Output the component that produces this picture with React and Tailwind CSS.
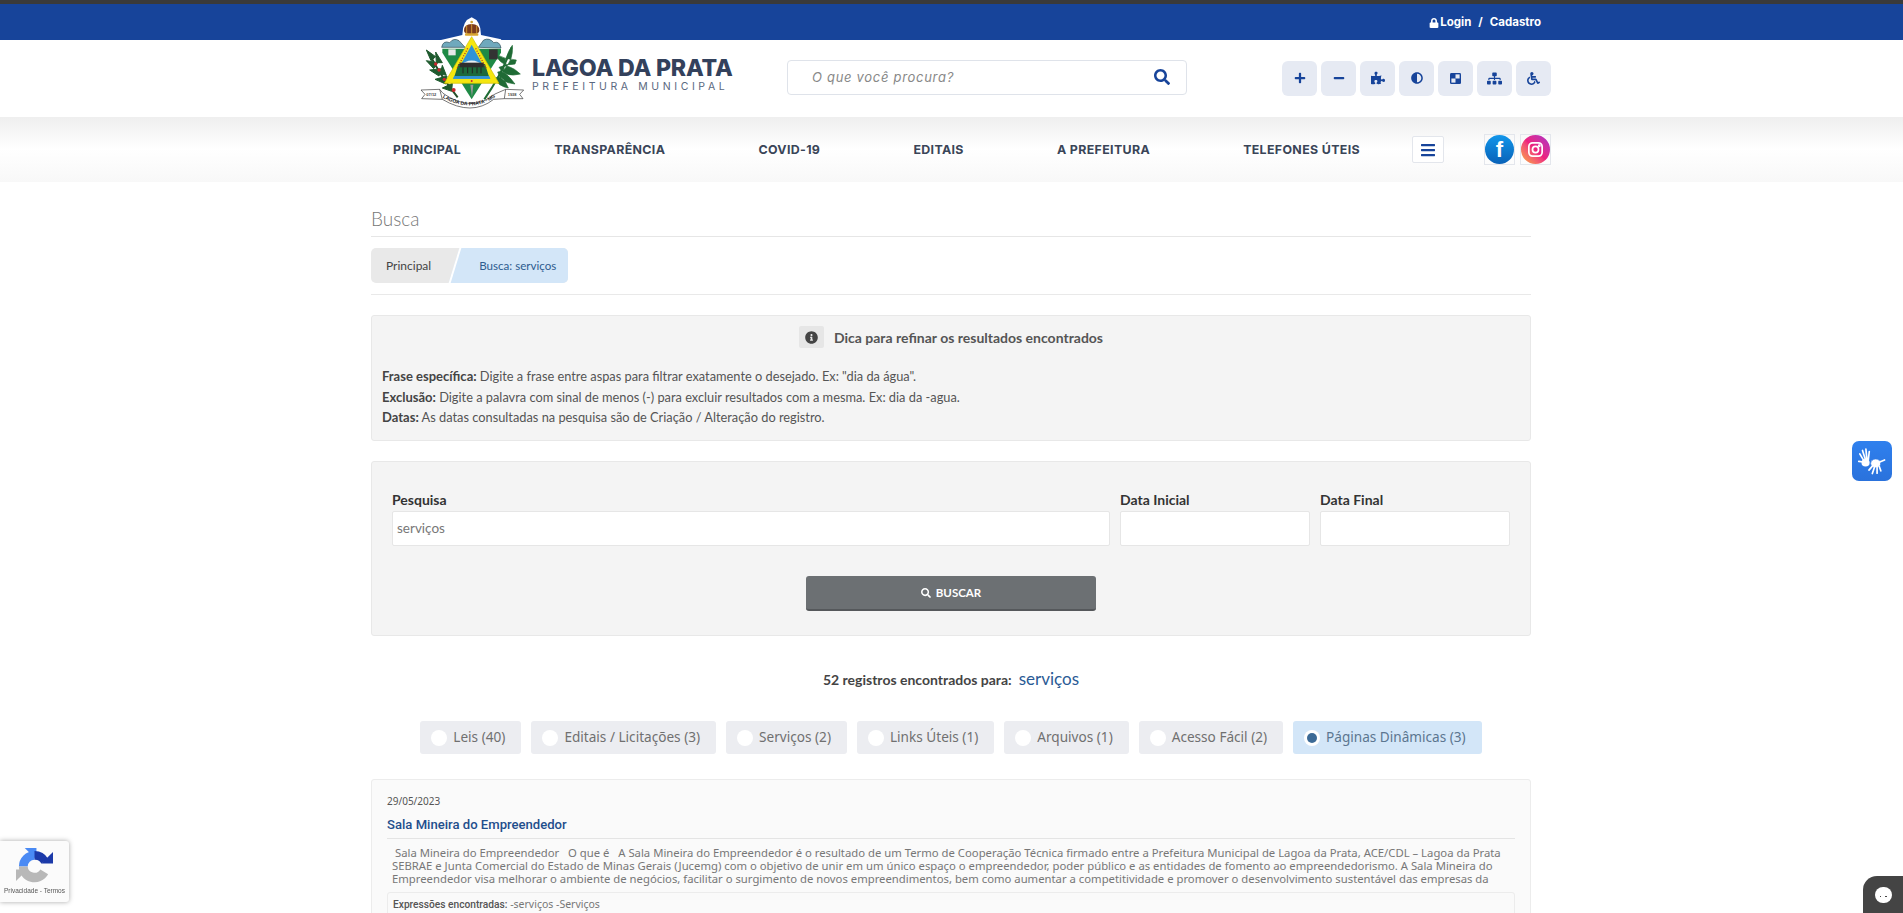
import { FaPlus, FaMinus, FaPuzzlePiece, FaAdjust, FaSitemap, FaWheelchair, FaLock, FaSearch, FaBars, FaInfoCircle } from "react-icons/fa"

const lato = "font-['Lato','Liberation_Sans',sans-serif]"

function Crest() {
  return (
    <svg viewBox="0 0 360 330" className="w-[120px] h-[110px] shrink-0">
      {/* white halo */}
      <path d="M170 22 Q198 32 198 75 L258 88 Q272 120 262 225 L175 290 L118 230 L72 222 Q66 120 78 90 L142 75 Q142 32 170 22 Z" fill="#fff" />
      {/* left branch */}
      <path d="M42 128 Q70 190 128 262" stroke="#234f2a" strokeWidth="6" fill="none" />
      <path d="M34 120 L62 140 L48 152 Z M34 152 L68 158 L56 176 Z M44 180 L80 176 L72 198 Z M60 208 L96 198 L92 222 Z M82 234 L112 220 L110 244 Z M62 126 L82 158 L64 158 Z M82 166 L94 196 L76 192 Z" fill="#1e5a2e" stroke="#1e5a2e" strokeWidth="3" strokeLinejoin="round" />
      <circle cx="62" cy="162" r="5" fill="#c8262c" />
      <circle cx="72" cy="180" r="5" fill="#c8262c" />
      <circle cx="88" cy="208" r="5" fill="#c8262c" />
      <circle cx="116" cy="240" r="6" fill="#c8262c" />
      {/* right branch */}
      <path d="M290 112 Q262 190 208 268" stroke="#1f6b35" strokeWidth="6" fill="none" />
      <path d="M292 106 Q296 150 266 180 Q270 138 292 106 Z M304 150 Q270 148 244 134 Q256 172 300 162 Z M316 192 Q280 158 252 172 Q270 204 316 192 Z M300 222 Q268 178 248 186 Q256 218 300 222 Z M238 206 Q262 188 280 234 Q250 228 238 206 Z" fill="#1f6b35" stroke="#1f6b35" strokeWidth="2" strokeLinejoin="round" />
      {/* shield */}
      <path d="M82 116 L258 116 L258 128 L170 268 L82 128 Z" fill="#1f8a46" />
      <path d="M80 112 Q84 90 104 98 Q116 82 132 92 L150 112 Z" fill="#6fa9bd" stroke="#2d4a55" strokeWidth="2" />
      <path d="M190 112 L206 90 Q224 82 236 98 Q254 92 258 114 Z" fill="#6fa9bd" stroke="#2d4a55" strokeWidth="2" />
      <rect x="100" y="118" width="22" height="18" fill="#e9e9e9" />
      <rect x="222" y="118" width="26" height="30" fill="#333" />
      {/* sword below the triangle */}
      <path d="M166 224 H175 L171 262 Z" fill="#9a9a9a" />
      {/* triangle */}
      <path d="M170 80 L252 220 L88 220 Z" fill="#f5e60f" stroke="#cdbd00" strokeWidth="2" />
      <path d="M170 104 L226 206 L114 206 Z" fill="#2f93d6" />
      <path d="M132 168 Q170 135 208 168 Z" fill="#e9eef2" />
      <path d="M130 162 H210 L222 200 H118 Z" fill="#1c6a3b" />
      <path d="M134 158 H206 V172 H134 Z" fill="#2e2e2e" />
      <path d="M144 172 V190 M158 172 V190 M172 172 V190 M186 172 V190 M198 172 V190" stroke="#222" strokeWidth="3" />
      <path d="M118 198 H222 L226 206 H114 Z" fill="#2f93d6" />
      <path d="M158 115 L126 176 M182 115 L214 176" stroke="#a33" strokeWidth="4" strokeDasharray="3 5" />
      <circle cx="170" cy="213" r="3" fill="#c8262c" />
      {/* crown */}
      <circle cx="170" cy="36" r="4" fill="#c9a033" />
      <path d="M147 62 Q147 42 170 42 Q193 42 193 62 Q193 72 170 72 Q147 72 147 62 Z" fill="#7a3b1e" />
      <path d="M155 46 V70 M170 42 V72 M185 46 V70" stroke="#d9a531" strokeWidth="2.5" />
      <rect x="150" y="70" width="40" height="7" rx="2" fill="#d9a531" />
      {/* ribbon */}
      <path d="M18 240 L74 238 L84 250 Q170 310 240 252 L272 238 L326 240 L314 253 L324 266 L268 266 L236 268 Q170 320 82 268 L20 266 L30 253 Z" fill="#fff" stroke="#333" strokeWidth="2" />
      <path d="M74 238 L82 268 M272 238 L268 266" stroke="#333" strokeWidth="2" />
      <path id="crest-ribbon" d="M82 262 Q170 312 242 260" fill="none" />
      <text fontSize="15" fontWeight="700" fill="#222" fontFamily="Liberation Sans, sans-serif">
        <textPath href="#crest-ribbon" startOffset="50%" textAnchor="middle">LAGOA DA PRATA - MG</textPath>
      </text>
      <text x="34" y="258" fontSize="12" fontWeight="700" fill="#444" fontFamily="Liberation Sans, sans-serif">07/12</text>
      <text x="278" y="258" fontSize="12" fontWeight="700" fill="#444" fontFamily="Liberation Sans, sans-serif">1938</text>
    </svg>
  )
}

function CheckerIcon() {
  return (
    <svg viewBox="0 0 12 12" className="w-[11px] h-[11px]">
      <rect width="12" height="12" rx="1.5" fill="#17449a" />
      <rect x="6" y="1.5" width="4.5" height="4.5" fill="#e6eaf3" />
      <rect x="1.5" y="6" width="4.5" height="4.5" fill="#e6eaf3" />
    </svg>
  )
}

function HandsIcon() {
  return (
    <svg viewBox="10 10 118 118" className="w-[40px] h-[40px]" fill="none" stroke="#fff" strokeLinecap="round">
      <g strokeWidth="5">
        <path d="M46 70 L33 48 M50 66 L41 38 M54 64 L51 34 M58 66 L61 41" />
        <path d="M44 72 L30 70" />
      </g>
      <ellipse cx="50" cy="74" rx="12" ry="11" fill="#fff" stroke="none" />
      <ellipse cx="80" cy="76" rx="15" ry="13" fill="#fff" stroke="#2f7ae8" strokeWidth="2" />
      <g strokeWidth="5">
        <path d="M70 84 L60 96 M76 88 L70 106 M84 88 L84 105 M90 84 L95 98" />
        <path d="M92 72 L106 66" />
      </g>
    </svg>
  )
}

function ToolButton({ children }) {
  return (
    <button className="w-[35px] h-[35px] rounded-md bg-[#e6eaf3] flex items-center justify-center text-[#17449a] text-[12px]">
      {children}
    </button>
  )
}

function Header() {
  return (
    <header>
      <div className="h-1 bg-[#3a3a3a]" />
      <div className="h-9 bg-[#17449a] flex justify-end items-center pr-[362px] pt-[1px] text-white text-[11.5px] font-bold font-['Inter',sans-serif]">
        <FaLock className="text-[10px] mr-[1px]" />
        <span>Login</span>
        <span className="mx-[7px]">/</span>
        <span>Cadastro</span>
      </div>
      <div className="relative h-[77px] bg-white flex items-center">
        <div className="absolute left-[415px] top-[-30px] z-10">
          <Crest />
        </div>
        <div className="ml-[532px] w-[215px] shrink-0 pb-[8px] font-['Inter',sans-serif]">
          <div className="text-[#33415c] text-[23.2px] leading-[24px] font-extrabold tracking-[-0.2px] whitespace-nowrap">LAGOA DA PRATA</div>
          <div className="text-[#5a6880] text-[10.5px] leading-[13px] tracking-[3.6px] whitespace-nowrap">PREFEITURA MUNICIPAL</div>
        </div>
        <div className="ml-[40px] w-[400px] h-[35px] border border-[#dfe3ea] rounded-[4px] bg-white flex items-center justify-between pl-6 pr-[16px] mb-[3px]">
          <span className="italic text-[13px] tracking-[0.7px] pt-[1px] text-[#888] font-['Inter',sans-serif]">O que você procura?</span>
          <FaSearch className="text-[#17449a] text-[16px]" />
        </div>
        <div className="ml-[95px] flex gap-1 mb-[1px]">
          <ToolButton><FaPlus /></ToolButton>
          <ToolButton><FaMinus /></ToolButton>
          <ToolButton><FaPuzzlePiece className="text-[14px]" /></ToolButton>
          <ToolButton><FaAdjust /></ToolButton>
          <ToolButton><CheckerIcon /></ToolButton>
          <ToolButton><FaSitemap className="text-[15px]" /></ToolButton>
          <ToolButton><FaWheelchair className="text-[13px]" /></ToolButton>
        </div>
      </div>
      <nav className="relative h-[65px] bg-gradient-to-b from-[#efefef] via-white via-50% to-[#f8f8f8] flex items-center font-['Inter',sans-serif]">
        <ul className="ml-[393px] w-[967px] shrink-0 pt-[1px] flex items-center justify-between text-[12.4px] font-bold text-[#3a4558] tracking-[0.35px] whitespace-nowrap">
          <li>PRINCIPAL</li>
          <li>TRANSPARÊNCIA</li>
          <li>COVID-19</li>
          <li>EDITAIS</li>
          <li>A PREFEITURA</li>
          <li>TELEFONES ÚTEIS</li>
        </ul>
        <button className="ml-[52px] w-[32px] h-[27px] bg-white border border-[#e3e6ec] rounded-[2px] flex items-center justify-center text-[#17449a] text-[16px]">
          <FaBars />
        </button>
        <div className="ml-[40px] flex gap-[5px]">
          <div className="w-[31px] h-[31px] border border-[#e3e6ec] flex items-center justify-center">
            <div className="w-[29px] h-[29px] shrink-0 rounded-full bg-gradient-to-b from-[#1296ea] to-[#0a62b8] flex items-center justify-center text-white text-[22px] font-bold font-['Liberation_Sans',sans-serif]">f</div>
          </div>
          <div className="w-[31px] h-[31px] border border-[#e3e6ec] flex items-center justify-center">
            <div className="w-[29px] h-[29px] shrink-0 rounded-full bg-gradient-to-tr from-[#f9a825] via-[#ee1f7e] to-[#a928c9] flex items-center justify-center">
              <svg viewBox="0 0 20 20" className="w-[19px] h-[19px]" fill="none" stroke="#fff" strokeWidth="1.8">
                <rect x="3" y="3" width="14" height="14" rx="4" />
                <circle cx="10" cy="10" r="3.2" />
                <circle cx="14" cy="6" r="0.6" fill="#fff" />
              </svg>
            </div>
          </div>
        </div>
      </nav>
    </header>
  )
}

function Breadcrumb() {
  return (
    <div className="relative w-[197px] h-[35px] rounded-[5px] bg-[#e9e9e9] overflow-hidden flex items-center text-[12px]">
      <div className="absolute left-[83px] top-0 w-[200px] h-full bg-[#d3e6f8] border-l-2 border-white -skew-x-[17deg]" />
      <span className="relative ml-[15px] text-[#444]">Principal</span>
      <span className="relative ml-[48px] text-[11.6px] text-[#2e5c8f]">Busca: serviços</span>
    </div>
  )
}

function HintPanel() {
  return (
    <section className="h-[126px] bg-[#f4f4f4] border border-[#e8e8e8] rounded-[3px] px-[10px] pt-[10px] text-[#555]">
      <div className="flex items-center justify-center gap-[10px] h-[22px] text-[14px] font-bold">
        <span className="w-[25px] h-[22px] bg-[#e6e6e6] rounded-[2px] flex items-center justify-center text-[#444] text-[13px]">
          <FaInfoCircle />
        </span>
        Dica para refinar os resultados encontrados
      </div>
      <div className="mt-[18px] text-[12.8px] leading-[20.5px]">
        <p><b className="text-[13px] text-[#444]">Frase específica:</b> Digite a frase entre aspas para filtrar exatamente o desejado. Ex: "dia da água".</p>
        <p><b className="text-[13px] text-[#444]">Exclusão:</b> Digite a palavra com sinal de menos (-) para excluir resultados com a mesma. Ex: dia da -agua.</p>
        <p><b className="text-[13px] text-[#444]">Datas:</b> As datas consultadas na pesquisa são de Criação / Alteração do registro.</p>
      </div>
    </section>
  )
}

function Field({ label, value, className }) {
  return (
    <label className={className}>
      <span className="block text-[14px] leading-[20px] font-bold text-[#333] mb-[1px]">{label}</span>
      <span className="block h-[35px] bg-white border border-[#e6e6e6] rounded-[2px] px-[4px] text-[13.5px] leading-[33px] text-[#777]">{value}</span>
    </label>
  )
}

function SearchPanel() {
  return (
    <section className="mt-5 h-[175px] bg-[#f4f4f4] border border-[#e8e8e8] rounded-[3px] px-5 pt-[28px]">
      <div className="flex gap-[10px]">
        <Field label="Pesquisa" value="serviços" className="w-[718px]" />
        <Field label="Data Inicial" className="w-[190px]" />
        <Field label="Data Final" className="w-[190px]" />
      </div>
      <button className="block mx-auto mt-[30px] w-[290px] h-[35px] bg-[#6c7073] border-b-2 border-[#55585b] rounded-[3px] text-white text-[11.5px] font-bold">
        <FaSearch className="inline text-[10px] mr-[5px] mb-[2px]" />
        BUSCAR
      </button>
    </section>
  )
}

const filters = [
  "Leis (40)",
  "Editais / Licitações (3)",
  "Serviços (2)",
  "Links Úteis (1)",
  "Arquivos (1)",
  "Acesso Fácil (2)",
  "Páginas Dinâmicas (3)",
]

function Filters() {
  return (
    <div className="mt-[32px] flex justify-center gap-[10px] font-['Noto_Sans',sans-serif] text-[13.6px]">
      {filters.map((f, i) => {
        const active = i === filters.length - 1
        return (
          <div key={f} className={"h-[33px] rounded-[3px] pl-[11px] pr-[16px] flex items-center gap-[6px] whitespace-nowrap " + (active ? "bg-[#d3e6f8] text-[#5c7690]" : "bg-[#ecedf1] text-[#707070]")}>
            <span className="w-[16px] h-[16px] rounded-full bg-white flex items-center justify-center">
              {active && <span className="w-[10px] h-[10px] rounded-full bg-[#3c6a96]" />}
            </span>
            {f}
          </div>
        )
      })}
    </div>
  )
}

function ResultCard() {
  return (
    <article className="mt-[25px] bg-[#fafafa] border border-[#ececec] rounded-[3px] px-[15px] pt-[14px] pb-4 font-['Noto_Sans',sans-serif]">
      <div className="text-[10px] leading-[14px] text-[#555]">29/05/2023</div>
      <h3 className="mt-[7px] pb-[3px] text-[13.1px] leading-[20px] font-medium text-[#1f4e8c] border-b border-[#e4e4e4] font-['Roboto',sans-serif]">Sala Mineira do Empreendedor</h3>
      <p className="mt-[7px] px-[5px] text-[11.3px] leading-[13px] text-[#777] whitespace-pre">
        {" Sala Mineira do Empreendedor   O que é   A Sala Mineira do Empreendedor é o resultado de um Termo de Cooperação Técnica firmado entre a Prefeitura Municipal de Lagoa da Prata, ACE/CDL – Lagoa da Prata\n"}
        {"SEBRAE e Junta Comercial do Estado de Minas Gerais (Jucemg) com o objetivo de unir em um único espaço o empreendedor, poder público e as entidades de fomento ao empreendedorismo. A Sala Mineira do\n"}
        {"Empreendedor visa melhorar o ambiente de negócios, facilitar o surgimento de novos empreendimentos, bem como aumentar a competitividade e promover o desenvolvimento sustentável das empresas da"}
      </p>
      <div className="mt-[7px] h-[40px] border border-[#ececec] rounded-[3px] px-[5px] pt-[3px] text-[10.5px] leading-[16px] text-[#777]">
        <b className="font-['Roboto',sans-serif] font-medium text-[10.2px] text-[#555]">Expressões encontradas:</b> -serviços -Serviços
      </div>
    </article>
  )
}

function Overlays() {
  return (
    <>
      <div className="fixed right-[11px] top-[441px] w-[40px] h-[40px] rounded-[7px] bg-gradient-to-b from-[#2f80ee] to-[#2a72dc]">
        <HandsIcon />
      </div>
      <div className="fixed left-0 top-[841px] w-[69px] h-[61px] bg-[#fbfbfb] rounded-r-[3px] shadow-[0_0_5px_rgba(0,0,0,0.35)] flex flex-col items-center pt-[7px]">
        <svg viewBox="0 0 38 38" className="w-[37px] h-[37px]">
          <path d="M19 3 A16 16 0 0 0 3 19 H12 A7 7 0 0 1 19 12 Z" fill="#4a8af4" />
          <path d="M9 0 L21 0 L21 12 Z" fill="#4a8af4" />
          <path d="M19 3 A16 16 0 0 1 33 11 L26 16 A7 7 0 0 0 19 12 Z" fill="#1c3aa9" />
          <path d="M38 4 V16 H26 Z" fill="#1c3aa9" />
          <path d="M3 19 A16 16 0 0 0 33 27 L25 22 A7 7 0 0 1 12 19 Z" fill="#b8b8b8" />
          <path d="M0 12 H12 L0 24 Z" fill="#b8b8b8" transform="translate(0 10)" />
        </svg>
        <span className="text-[6.5px] leading-[8px] mt-[2px] text-[#555] whitespace-nowrap font-['Liberation_Sans',sans-serif]">Privacidade - Termos</span>
      </div>
      <div className="fixed right-0 bottom-0 w-[40px] h-[37px] bg-[#444] rounded-tl-[14px] flex items-center justify-center">
        <span className="relative w-[17px] h-[16px] rounded-full bg-white flex items-center justify-center gap-[4px] pt-[4px]">
          <span className="w-[1.5px] h-[1.5px] bg-[#444]" />
          <span className="w-[1.5px] h-[1.5px] bg-[#444]" />
        </span>
      </div>
    </>
  )
}

export default function App() {
  return (
    <div className={"h-[913px] overflow-hidden bg-white " + lato}>
      <Header />
      <main className="w-[1160px] ml-[371px]">
        <h1 className="pt-[24px] h-[55px] border-b border-[#e6e6e6] text-[19px] leading-[26px] font-light text-[#777]">Busca</h1>
        <div className="mt-[11px] pb-[11px] border-b border-[#e9e9e9]">
          <Breadcrumb />
        </div>
        <div className="mt-5">
          <HintPanel />
        </div>
        <SearchPanel />
        <div className="mt-[33px] h-[20px] flex items-center justify-center gap-[7px] text-[14px] font-bold text-[#444]">
          52 registros encontrados para:
          <span className="text-[17px] font-normal text-[#2a5a95]">serviços</span>
        </div>
        <Filters />
        <ResultCard />
      </main>
      <Overlays />
    </div>
  )
}
